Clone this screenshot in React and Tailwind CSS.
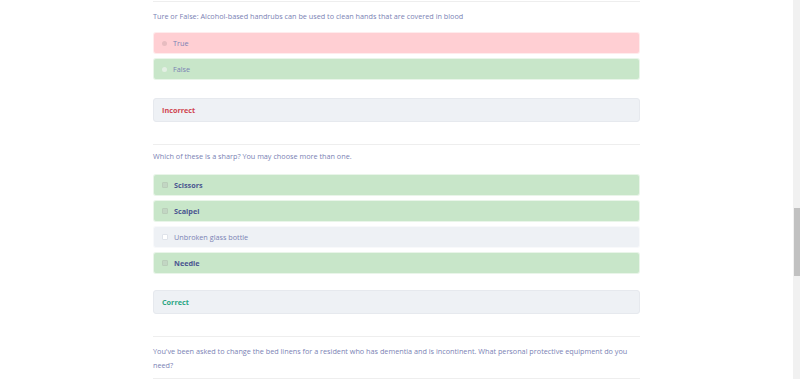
import React from "react";

const font = { fontFamily: "'Open Sans', 'Liberation Sans', sans-serif" };

const Option = ({ label, tone, bold, kind, checked }) => {
    const bg = tone === "red" ? "bg-[#ffcfd3]" : tone === "green" ? "bg-[#c8e6c9]" : "bg-[#eef1f5]";
    return (
        <div className={`${bg} h-[22px] rounded-[3px] flex items-center pl-[8px] border border-white/60`}>
            {kind === "radio" ? (
                <span className={`w-[5px] h-[5px] rounded-full ${tone === "red" ? "bg-[#e7bcc0]" : "bg-[#e3efe4]"}`} />
            ) : (
                <span className={`w-[6px] h-[6px] rounded-[1px] border ${checked ? "border-[#b9cdb9] bg-[#c2d6c3]" : "border-[#dfe3ea] bg-white"}`} />
            )}
            <span className={`ml-[6px] text-[7.25px] ${bold ? "font-bold text-[#4a5590]" : "text-[#7a82b4]"}`}>{label}</span>
        </div>
    );
};

const Feedback = ({ text, color }) => (
    <div className="bg-[#eef1f5] h-[24px] rounded-[3px] flex items-center px-[8px] border border-[#e6e9ee]">
        <span className={`text-[7.25px] font-bold ${color}`}>{text}</span>
    </div>
);

export default function App() {
    return (
        <div className="w-[800px] h-[379px] bg-white flex overflow-hidden" style={font}>
            <div className="flex-1 pl-[153px]">
                <div className="w-[487px] flex flex-col">
                    <div className="h-[2px] border-b border-[#eeeeee]" />
                    <p className="mt-[9px] text-[7.25px] leading-[10px] text-[#7a82b4]">
                        Ture or False: Alcohol-based handrubs can be used to clean hands that are covered in blood
                    </p>
                    <div className="mt-[11px] flex flex-col gap-[4px]">
                        <Option label="True" tone="red" kind="radio" />
                        <Option label="False" tone="green" kind="radio" />
                    </div>
                    <div className="mt-[18px]">
                        <Feedback text="Incorrect" color="text-[#d0454f]" />
                    </div>
                    <div className="mt-[22px] border-t border-[#eeeeee]" />
                    <p className="mt-[6px] text-[7.25px] leading-[10px] text-[#7a82b4]">
                        Which of these is a sharp? You may choose more than one.
                    </p>
                    <div className="mt-[13px] flex flex-col gap-[4px]">
                        <Option label="Scissors" tone="green" bold checked />
                        <Option label="Scalpel" tone="green" bold checked />
                        <Option label="Unbroken glass bottle" tone="gray" />
                        <Option label="Needle" tone="green" bold checked />
                    </div>
                    <div className="mt-[16px]">
                        <Feedback text="Correct" color="text-[#2aa683]" />
                    </div>
                    <div className="mt-[22px] border-t border-[#eeeeee]" />
                    <p className="mt-[7px] text-[7.25px] leading-[14px] text-[#7a82b4] pr-[10px]">
                        You've been asked to change the bed linens for a resident who has dementia and is incontinent. What personal protective equipment do you need?
                    </p>
                    <div className="mt-[6px] border-t border-[#eeeeee]" />
                </div>
            </div>
            <div className="w-[7px] bg-[#f1f1f1] flex flex-col">
                <div className="mt-[208px] h-[68px] mx-[0.5px] bg-[#c1c1c1]" />
            </div>
        </div>
    );
}
